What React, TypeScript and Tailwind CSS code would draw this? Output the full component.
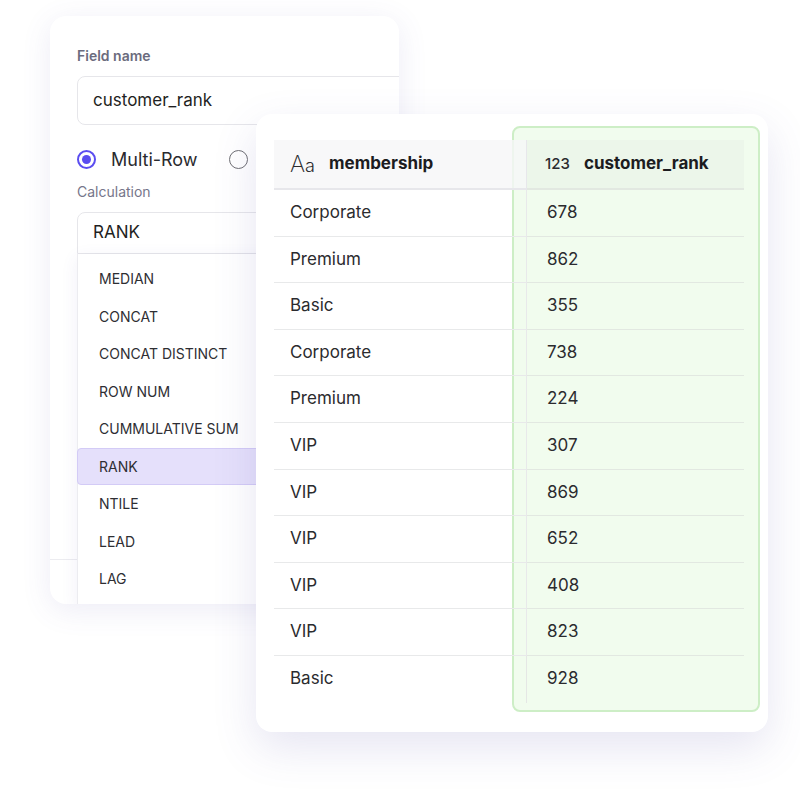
const menuItems = ['MEDIAN', 'CONCAT', 'CONCAT DISTINCT', 'ROW NUM', 'CUMMULATIVE SUM', 'RANK', 'NTILE', 'LEAD', 'LAG'];

const rows: [string, number][] = [
  ['Corporate', 678],
  ['Premium', 862],
  ['Basic', 355],
  ['Corporate', 738],
  ['Premium', 224],
  ['VIP', 307],
  ['VIP', 869],
  ['VIP', 652],
  ['VIP', 408],
  ['VIP', 823],
  ['Basic', 928],
];

function FieldCard() {
  return (
    <div className="absolute left-[50px] top-[16px] w-[349px] h-[588px] rounded-2xl bg-white overflow-hidden shadow-[0_6px_30px_rgba(90,80,170,0.11)]">
      <div className="pl-[27px] pt-[30px] flex flex-col">
        <div className="text-[14px] leading-5 font-semibold text-[#6b6b7d]">Field name</div>
        <div className="mt-[10px] h-[49px] w-[340px] rounded-lg border border-[#e6e6ea] flex items-center pl-[15px] text-[17px] text-[#1f1f22]">
          customer_rank
        </div>
        <div className="mt-[22px] h-6 flex items-center">
          <span className="w-[19px] h-[19px] rounded-full border-2 border-[#5b4df0] flex items-center justify-center">
            <span className="w-[9px] h-[9px] rounded-full bg-[#5b4df0]" />
          </span>
          <span className="ml-[15px] text-[18px] text-[#2a2a2e]">Multi-Row</span>
          <span className="ml-[31px] w-[19px] h-[19px] rounded-full border-[1.5px] border-[#6f6f74]" />
        </div>
        <div className="mt-[11px] text-[14px] leading-5 text-[#76768a]">Calculation</div>
        <div className="mt-[10px] h-[42px] w-[340px] rounded-t-lg border border-[#e6e6ea] flex items-center pl-[15px] text-[17px] text-[#1f1f22]">
          RANK
        </div>
      </div>
      <div className="absolute left-0 right-0 top-[543px] border-t border-[#ececf0]" />
      <div className="absolute left-[27px] top-[238px] w-[300px] h-[352px] bg-white border-l border-[#ececf0] shadow-[0_4px_16px_rgba(80,70,160,0.08)] pt-[6px]">
        {menuItems.map((item) => (
          <div
            key={item}
            className={
              item === 'RANK'
                ? 'h-[37.5px] -ml-px flex items-center pl-[21px] text-[14px] text-[#2e2e33] bg-[#e5e0fb] border border-[#d3cbf6] rounded-sm'
                : 'h-[37.5px] flex items-center pl-[21px] text-[14px] text-[#2e2e33]'
            }
          >
            {item}
          </div>
        ))}
      </div>
    </div>
  );
}

function TableCard() {
  return (
    <div className="absolute left-[256px] top-[114px] w-[512px] h-[618px] rounded-2xl bg-white shadow-[0_16px_44px_rgba(90,80,170,0.15)]">
      <div className="absolute left-[256px] top-[12px] w-[248px] h-[586px] rounded-lg border-2 border-[#cdeec6] bg-[#f1fcee]" />
      <div className="relative pl-[18px] pr-[24px] pt-[26px]">
        <div className="grid grid-cols-[253px_217px]">
          <div className="h-[50px] bg-[#f6f6f8]/80 border-b-2 border-r border-[#e7e7eb] flex items-center pl-[16px] gap-[14px]">
            <span className="flex items-baseline text-[#2b2b2e] leading-none">
              <span className="text-[23px] font-extralight">A</span>
              <span className="text-[18px] font-light">a</span>
            </span>
            <span className="text-[17px] font-bold text-[#1c1c1f]">membership</span>
          </div>
          <div className="h-[50px] bg-[#eaf4e8]/70 border-b-2 border-[#e2e8e1] flex items-center pl-[18px] gap-[14px]">
            <span className="text-[15px] font-medium text-[#2b2b2e]">123</span>
            <span className="text-[17px] font-bold text-[#1c1c1f]">customer_rank</span>
          </div>
          {rows.map(([m, r], i) => {
            const last = i === rows.length - 1;
            return [
              <div
                key={`m${i}`}
                className={
                  last
                    ? 'h-[46.6px] border-r border-[#e5e7e5] flex items-center pl-[16px] text-[17px] text-[#2b2b2e]'
                    : 'h-[46.6px] border-r border-b border-[#e8e9ea] flex items-center pl-[16px] text-[17px] text-[#2b2b2e]'
                }
              >
                {m}
              </div>,
              <div
                key={`r${i}`}
                className={
                  last
                    ? 'h-[46.6px] flex items-center pl-[20px] text-[17px] text-[#2b2b2e]'
                    : 'h-[46.6px] border-b border-[#e2e8e1] flex items-center pl-[20px] text-[17px] text-[#2b2b2e]'
                }
              >
                {r}
              </div>,
            ];
          })}
        </div>
      </div>
    </div>
  );
}

export default function App() {
  return (
    <div className="relative w-[800px] h-[801px] bg-white overflow-hidden" style={{ fontFamily: 'Inter, "Noto Sans", sans-serif' }}>
      <FieldCard />
      <TableCard />
    </div>
  );
}
